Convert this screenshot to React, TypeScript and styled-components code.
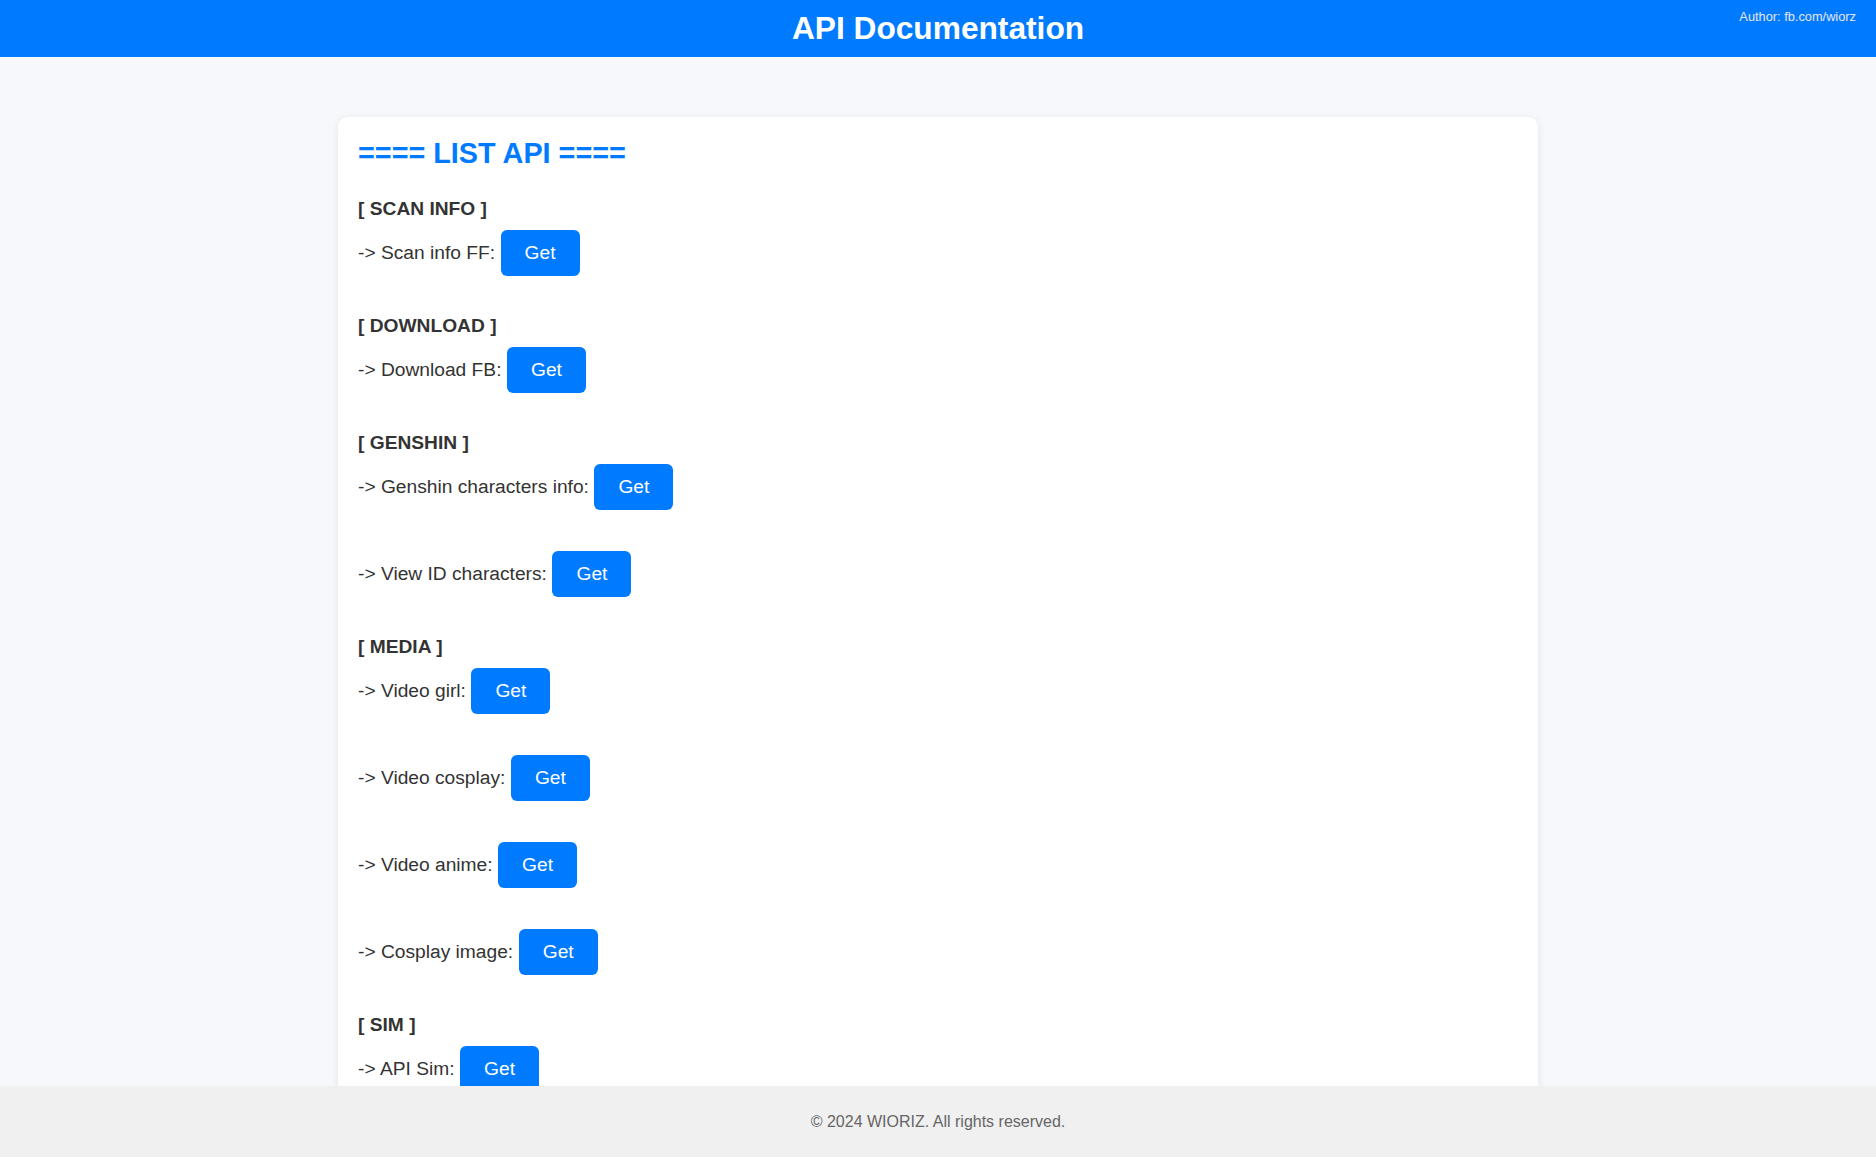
import React from "react";
import styled, { createGlobalStyle } from "styled-components";

const GlobalStyle = createGlobalStyle`
  * { box-sizing: border-box; }
  html, body {
    margin: 0;
    padding: 0;
    background: #f7f8fc;
    font-family: "Liberation Sans", Arial, Helvetica, sans-serif;
    color: #333333;
  }
`;

const Header = styled.header`
  position: relative;
  height: 57px;
  padding-bottom: 2px;
  background: #007bff;
  display: flex;
  align-items: center;
  justify-content: center;
`;

const HeaderTitle = styled.h1`
  margin: 0;
  color: #ffffff;
  font-size: 31.7px;
  font-weight: 700;
  line-height: 36px;
`;

const Author = styled.div`
  position: absolute;
  top: 9px;
  right: 20px;
  font-size: 12.8px;
  line-height: 15px;
  color: #e6e6f0;
`;

const Main = styled.main`
  padding: 60px 0 120px;
  display: flex;
  justify-content: center;
`;

const Card = styled.div`
  width: 1200px;
  background: #ffffff;
  border-radius: 10px;
  box-shadow: 0 2px 10px rgba(0, 0, 0, 0.08);
  padding: 18.5px 20px 40px;
  display: flex;
  flex-direction: column;
  gap: 39px;
`;

const ListTitle = styled.h2`
  margin: 0 0 -10.6px;
  font-size: 28.8px;
  line-height: 34px;
  font-weight: 700;
  color: #007bff;
`;

const Section = styled.section`
  display: flex;
  flex-direction: column;
`;

const SectionHeading = styled.h3`
  margin: 0 0 10px;
  font-size: 19.2px;
  line-height: 22px;
  font-weight: 700;
  color: #333333;
`;

const Rows = styled.div`
  display: flex;
  flex-direction: column;
  gap: 41px;
`;

const Row = styled.div`
  display: flex;
  align-items: center;
  gap: 5.5px;
  height: 46px;
`;

const Label = styled.span`
  font-size: 19.2px;
  line-height: 22px;
  color: #333333;
`;

const GetButton = styled.button`
  height: 46px;
  padding: 0 24px;
  border: none;
  border-radius: 6px;
  background: #007bff;
  color: #ffffff;
  font-family: "Liberation Sans", Arial, Helvetica, sans-serif;
  font-size: 19.2px;
  line-height: 22px;
  cursor: pointer;
`;

const Footer = styled.footer`
  position: fixed;
  left: 0;
  right: 0;
  bottom: 0;
  height: 71px;
  background: #f0f0f0;
  display: flex;
  align-items: center;
  justify-content: center;
  color: #666666;
  font-size: 16px;
  line-height: 19px;
`;

const sections: { title: string; items: string[] }[] = [
  { title: "[ SCAN INFO ]", items: ["Scan info FF"] },
  { title: "[ DOWNLOAD ]", items: ["Download FB"] },
  { title: "[ GENSHIN ]", items: ["Genshin characters info", "View ID characters"] },
  { title: "[ MEDIA ]", items: ["Video girl", "Video cosplay", "Video anime", "Cosplay image"] },
  { title: "[ SIM ]", items: ["API Sim"] },
];

export default function App() {
  return (
    <>
      <GlobalStyle />
      <Header>
        <HeaderTitle>API Documentation</HeaderTitle>
        <Author>Author: fb.com/wiorz</Author>
      </Header>
      <Main>
        <Card>
          <ListTitle>==== LIST API ====</ListTitle>
          {sections.map((s) => (
            <Section key={s.title}>
              <SectionHeading>{s.title}</SectionHeading>
              <Rows>
                {s.items.map((item) => (
                  <Row key={item}>
                    <Label>-&gt; {item}:</Label>
                    <GetButton>Get</GetButton>
                  </Row>
                ))}
              </Rows>
            </Section>
          ))}
        </Card>
      </Main>
      <Footer>© 2024 WIORIZ. All rights reserved.</Footer>
    </>
  );
}
